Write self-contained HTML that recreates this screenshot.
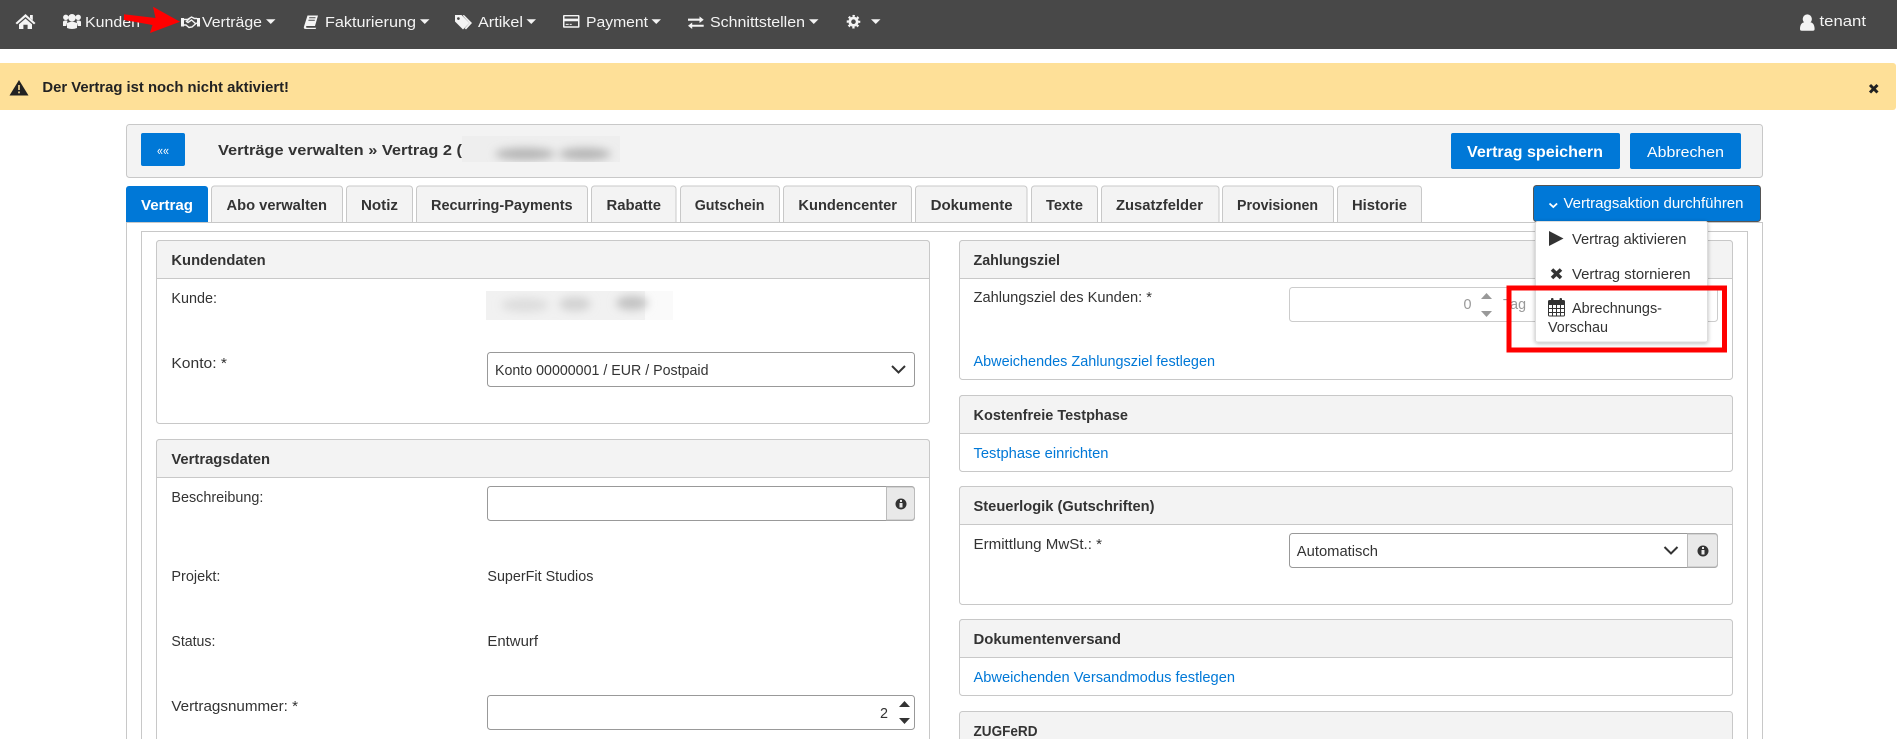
<!DOCTYPE html>
<html lang="de">
<head>
<meta charset="utf-8">
<title>Vertrag</title>
<style>
html,body{margin:0;padding:0;background:#fff;width:1897px;height:739px;overflow:hidden}
svg{display:block}
text{font-family:"Liberation Sans",Arial,sans-serif;font-size:15px;fill:#333}
.b{font-weight:700}
.w{fill:#fff}
.n{fill:#f4f4f4}
.l{fill:#0078d7}
.g{fill:#999}
.box{fill:#fff;stroke:#c8c8c8;stroke-width:1}
.hd{fill:#f3f3f3;stroke:#c8c8c8;stroke-width:1}
.inp{fill:#fff;stroke:#999;stroke-width:1}
.tab{fill:#f3f3f3;stroke:#c8c8c8;stroke-width:1}
</style>
</head>
<body>
<svg xmlns="http://www.w3.org/2000/svg" width="1897" height="739" viewBox="0 0 1897 739">
<defs>
<filter id="bl" x="-30%" y="-80%" width="160%" height="260%"><feGaussianBlur stdDeviation="4.500"/></filter>
<filter id="sh" x="-20%" y="-20%" width="140%" height="140%"><feDropShadow dx="0" dy="1" stdDeviation="2" flood-color="#000" flood-opacity=".28"/></filter>
<clipPath id="c1"><rect x="462" y="136" width="158" height="26"/></clipPath>
<clipPath id="c2"><rect x="486" y="291" width="187" height="29"/></clipPath>
</defs>

<!-- Navbar -->
<rect width="1897" height="49" fill="#484848"/>
<g fill="#f4f4f4">
<path d="M25.500 14 35.500 23 34 24.400 25.500 17 17 24.400 15.500 23Z"/>
<path d="M30 15h2.800v5.200L30 18Z"/>
<path d="M19 24.300 25.500 18.600 32 24.300V29H27.600V24.800H23.400V29H19Z"/>
<circle cx="72" cy="17.800" r="3.800"/>
<circle cx="65.800" cy="17.300" r="2.700"/>
<circle cx="78.200" cy="17.300" r="2.700"/>
<path d="M67 23q5-2.500 10 0v5q-5 2-10 0Z"/>
<path d="M63 21.500q2-1.800 4.500-.8l-1.200 5.300H63Z"/>
<path d="M81 21.500q-2-1.800-4.500-.8l1.200 5.300H81Z"/>
<path d="M304 26.500 307.500 15.500H318L315 26H306.500Q305.300 27.300 307 27.800H316.200L315.600 29H306Q303 29 304 26.500ZM309 18.200h6.500v-1H309.300Zm-.7 2.500h6.500v-1H308.600Z" fill-rule="evenodd"/>
<path d="M455 15h6.500l8 8-6.500 6.500-8-8Zm3.400 2.200a1.400 1.400 0 1 0 .01 0Z" fill-rule="evenodd"/>
<path d="M464 15l8 8-6 6.500-1.300-1.200 4.800-5.300-6.900-7.500Z"/>
<path d="M564 15h14.500a1 1 0 0 1 1 1v10.700a1 1 0 0 1-1 1H564a1 1 0 0 1-1-1V16a1 1 0 0 1 1-1Zm.5 1.400v2.200h13.500v-2.200Zm0 4.800v5h13.500v-5Zm1.200 2.700h3v1h-3Zm4 0h2v1h-2Z" fill-rule="evenodd"/>
<path d="M688 18.600h11.500v-2.200l4.200 3.300-4.200 3.300v-2.200H688Z"/>
<path d="M703.700 24.700H692.200v-2.200L688 25.700l4.200 3.300v-2.200h11.500Z"/>
<circle cx="1807.300" cy="19" r="4.600"/>
<path d="M1800 29c0-5 2.500-6.500 4.500-6.700q2.800 1.700 5.600 0c2 .2 4.500 1.700 4.500 6.700q0 1.800-1.800 1.800h-11q-1.800 0-1.800-1.800Z"/>
</g>
<circle cx="853.500" cy="21.700" r="3.700" fill="none" stroke="#f4f4f4" stroke-width="2.800"/>
<circle cx="853.500" cy="21.700" r="5.800" fill="none" stroke="#f4f4f4" stroke-width="2" stroke-dasharray="2.300 2.256" stroke-dashoffset="1.150"/>
<g fill="#f4f4f4"><rect x="181" y="18" width="3" height="8.500"/><rect x="197" y="18" width="3" height="8.500"/></g>
<path d="M184 19.500h3.500l4-2.500 3 1.500h2.500M184 25h2l3 2.500 3-.5 4-3.500 1-.5M196 24l-4.500-4-3.500 2.500-1.500-1 4-4" fill="none" stroke="#f4f4f4" stroke-width="1.400"/>
<text class="n" x="85" y="27" textLength="55" lengthAdjust="spacingAndGlyphs">Kunden</text>
<text class="n" x="202" y="27" textLength="60" lengthAdjust="spacingAndGlyphs">Verträge</text>
<text class="n" x="325" y="27" textLength="91" lengthAdjust="spacingAndGlyphs">Fakturierung</text>
<text class="n" x="478" y="27" textLength="45" lengthAdjust="spacingAndGlyphs">Artikel</text>
<text class="n" x="586" y="27" textLength="62" lengthAdjust="spacingAndGlyphs">Payment</text>
<text class="n" x="710" y="27" textLength="95" lengthAdjust="spacingAndGlyphs">Schnittstellen</text>
<text class="n" x="1819.500" y="26" textLength="46.500" lengthAdjust="spacingAndGlyphs">tenant</text>
<g fill="#f4f4f4">
<path d="M143 19.300h9l-4.500 4.700Z"/>
<path d="M266 19.300h9.500l-4.750 4.700Z"/>
<path d="M420 19.300h9.500l-4.750 4.700Z"/>
<path d="M526.500 19.300h9.500l-4.750 4.700Z"/>
<path d="M651.500 19.300h9.500l-4.750 4.700Z"/>
<path d="M809 19.300h9.500l-4.750 4.700Z"/>
<path d="M871 19.300h9.500l-4.750 4.700Z"/>
</g>
<path d="M124 14.300 155.500 18 153 6.700 180 21.700 150 33 152.500 25 124 20Z" fill="#f00"/>

<!-- Alert -->
<path d="M0 63H1893a3 3 0 0 1 3 3V107a3 3 0 0 1-3 3H0Z" fill="#fee098"/>
<path d="M19 80 28.500 95.500H9.500Z" fill="#222"/>
<rect x="18.200" y="85" width="1.600" height="5" fill="#fee098"/><rect x="18.200" y="91.500" width="1.600" height="1.800" fill="#fee098"/>
<text class="b" x="42.400" y="92" textLength="246.600" lengthAdjust="spacingAndGlyphs" style="fill:#222">Der Vertrag ist noch nicht aktiviert!</text>
<path d="M1870 85 1877.500 92.500M1877.500 85 1870 92.500" stroke="#222" stroke-width="3"/>

<!-- Header box -->
<rect class="hd" x="126.500" y="124.500" width="1636" height="53" rx="3"/>
<rect x="141" y="133" width="44" height="33" rx="2" fill="#0078d7"/>
<text class="w" x="157" y="155" style="font-size:13px" textLength="12" lengthAdjust="spacingAndGlyphs">««</text>
<text class="b" x="218" y="155" textLength="244" lengthAdjust="spacingAndGlyphs">Verträge verwalten » Vertrag 2 (</text>
<g clip-path="url(#c1)">
<rect x="462" y="136" width="158" height="26" fill="#eeeeee"/>
<g filter="url(#bl)"><ellipse cx="525" cy="154" rx="30" ry="6" fill="#b4b4b4"/><ellipse cx="585" cy="154" rx="26" ry="6" fill="#b4b4b4"/></g>
</g>
<rect x="1451" y="133" width="169" height="36" rx="2" fill="#0078d7"/>
<text class="b w" x="1467" y="157" textLength="136" lengthAdjust="spacingAndGlyphs" style="font-size:16px">Vertrag speichern</text>
<rect x="1630" y="133" width="111" height="36" rx="2" fill="#0078d7"/>
<text class="w" x="1647" y="157" textLength="77" lengthAdjust="spacingAndGlyphs">Abbrechen</text>

<!-- Tabs / frames -->
<path d="M126.500 739V222.500H1762.500V739" fill="#fff" stroke="#c8c8c8"/>
<path d="M141.500 739V231.500H1747.500V739" fill="#fff" stroke="#c8c8c8"/>
<path d="M126 222V189a3 3 0 0 1 3-3H205a3 3 0 0 1 3 3V222Z" fill="#0078d7"/>
<path class="tab" d="M211.500 222V189a3 3 0 0 1 3-3H339.500a3 3 0 0 1 3 3V222"/>
<path class="tab" d="M346.500 222V189a3 3 0 0 1 3-3H409.500a3 3 0 0 1 3 3V222"/>
<path class="tab" d="M416.500 222V189a3 3 0 0 1 3-3H584.500a3 3 0 0 1 3 3V222"/>
<path class="tab" d="M591.500 222V189a3 3 0 0 1 3-3H673a3 3 0 0 1 3 3V222"/>
<path class="tab" d="M680.500 222V189a3 3 0 0 1 3-3H776.500a3 3 0 0 1 3 3V222"/>
<path class="tab" d="M783.500 222V189a3 3 0 0 1 3-3H908.500a3 3 0 0 1 3 3V222"/>
<path class="tab" d="M915.500 222V189a3 3 0 0 1 3-3H1024a3 3 0 0 1 3 3V222"/>
<path class="tab" d="M1031.500 222V189a3 3 0 0 1 3-3H1094.500a3 3 0 0 1 3 3V222"/>
<path class="tab" d="M1101.500 222V189a3 3 0 0 1 3-3H1216a3 3 0 0 1 3 3V222"/>
<path class="tab" d="M1222.500 222V189a3 3 0 0 1 3-3H1330.500a3 3 0 0 1 3 3V222"/>
<path class="tab" d="M1337.500 222V189a3 3 0 0 1 3-3H1418.500a3 3 0 0 1 3 3V222"/>
<text class="b w" x="141" y="210" textLength="52" lengthAdjust="spacingAndGlyphs">Vertrag</text>
<text class="b" x="226.500" y="210" textLength="100.500" lengthAdjust="spacingAndGlyphs">Abo verwalten</text>
<text class="b" x="361" y="210" textLength="37" lengthAdjust="spacingAndGlyphs">Notiz</text>
<text class="b" x="431" y="210" textLength="141.600" lengthAdjust="spacingAndGlyphs">Recurring-Payments</text>
<text class="b" x="606.500" y="210" textLength="54.500" lengthAdjust="spacingAndGlyphs">Rabatte</text>
<text class="b" x="694.700" y="210" textLength="69.800" lengthAdjust="spacingAndGlyphs">Gutschein</text>
<text class="b" x="798.400" y="210" textLength="98.600" lengthAdjust="spacingAndGlyphs">Kundencenter</text>
<text class="b" x="930.600" y="210" textLength="82" lengthAdjust="spacingAndGlyphs">Dokumente</text>
<text class="b" x="1046" y="210" textLength="37" lengthAdjust="spacingAndGlyphs">Texte</text>
<text class="b" x="1116" y="210" textLength="87" lengthAdjust="spacingAndGlyphs">Zusatzfelder</text>
<text class="b" x="1237" y="210" textLength="81" lengthAdjust="spacingAndGlyphs">Provisionen</text>
<text class="b" x="1352" y="210" textLength="55" lengthAdjust="spacingAndGlyphs">Historie</text>

<!-- Left: Kundendaten -->
<rect class="box" x="156.500" y="240.500" width="773" height="183" rx="3"/>
<path class="hd" d="M156.500 278.500V243.500a3 3 0 0 1 3-3H926.500a3 3 0 0 1 3 3V278.500Z"/>
<text class="b" x="171.400" y="265" textLength="94.300" lengthAdjust="spacingAndGlyphs">Kundendaten</text>
<text x="171.400" y="303" textLength="45.600" lengthAdjust="spacingAndGlyphs">Kunde:</text>
<g clip-path="url(#c2)">
<rect x="486" y="291" width="187" height="29" fill="#f1f1f1"/>
<rect x="645" y="291" width="28" height="29" fill="#fafafa"/>
<g filter="url(#bl)"><ellipse cx="525" cy="305" rx="24" ry="7" fill="#dddddd"/><ellipse cx="575" cy="304" rx="16" ry="7" fill="#d2d2d2"/><ellipse cx="632" cy="303" rx="16" ry="7" fill="#c2c2c2"/></g>
</g>
<text x="171.400" y="368" textLength="55.600" lengthAdjust="spacingAndGlyphs">Konto: *</text>
<rect class="inp" x="487.500" y="352.500" width="427" height="34" rx="3"/>
<text x="495" y="375" textLength="213.500" lengthAdjust="spacingAndGlyphs">Konto 00000001 / EUR / Postpaid</text>
<path d="M892 366 898.500 372.500 905 366" fill="none" stroke="#333" stroke-width="2"/>

<!-- Left: Vertragsdaten -->
<path class="box" d="M156.500 739V442.500a3 3 0 0 1 3-3H926.500a3 3 0 0 1 3 3V739"/>
<path class="hd" d="M156.500 477.500V442.500a3 3 0 0 1 3-3H926.500a3 3 0 0 1 3 3V477.500Z"/>
<text class="b" x="171.400" y="464" textLength="98.600" lengthAdjust="spacingAndGlyphs">Vertragsdaten</text>
<text x="171.400" y="502" textLength="92" lengthAdjust="spacingAndGlyphs">Beschreibung:</text>
<rect class="inp" x="487.500" y="486.500" width="427" height="34" rx="3"/>
<path d="M886.500 487H911.500a3 3 0 0 1 3 3V517a3 3 0 0 1-3 3H886.500Z" fill="#e9e9e9" stroke="#bbb"/>
<circle cx="901" cy="504" r="5.500" fill="#333"/><rect x="900" y="500" width="2" height="2" fill="#e9e9e9"/><rect x="899.500" y="503" width="3" height="4.500" fill="#e9e9e9"/>
<text x="171.400" y="581" textLength="49" lengthAdjust="spacingAndGlyphs">Projekt:</text>
<text x="487.400" y="581" textLength="106" lengthAdjust="spacingAndGlyphs">SuperFit Studios</text>
<text x="171.400" y="646" textLength="44" lengthAdjust="spacingAndGlyphs">Status:</text>
<text x="487.400" y="646" textLength="50.600" lengthAdjust="spacingAndGlyphs">Entwurf</text>
<text x="171.400" y="711" textLength="126.600" lengthAdjust="spacingAndGlyphs">Vertragsnummer: *</text>
<rect class="inp" x="487.500" y="695.500" width="427" height="34" rx="3"/>
<text x="880" y="718" textLength="8" lengthAdjust="spacingAndGlyphs">2</text>
<path d="M899 707h11l-5.500-6Z" fill="#333"/><path d="M899 718h11l-5.500 6Z" fill="#333"/>

<!-- Right: Zahlungsziel -->
<rect class="box" x="959.500" y="240.500" width="773" height="139" rx="3"/>
<path class="hd" d="M959.500 278.500V243.500a3 3 0 0 1 3-3H1729.500a3 3 0 0 1 3 3V278.500Z"/>
<text class="b" x="973.500" y="265" textLength="86.500" lengthAdjust="spacingAndGlyphs">Zahlungsziel</text>
<text x="973.500" y="302" textLength="178.500" lengthAdjust="spacingAndGlyphs">Zahlungsziel des Kunden: *</text>
<rect x="1289.500" y="287.500" width="428" height="34" rx="3" fill="#fff" stroke="#ccc"/>
<text class="g" x="1463.500" y="309" textLength="8" lengthAdjust="spacingAndGlyphs">0</text>
<path d="M1481 299h11l-5.500-6Z" fill="#999"/><path d="M1481 311h11l-5.500 6Z" fill="#999"/>
<text class="g" x="1503" y="309" textLength="23" lengthAdjust="spacingAndGlyphs">Tag</text>
<text class="l" x="973.500" y="366" textLength="241.500" lengthAdjust="spacingAndGlyphs">Abweichendes Zahlungsziel festlegen</text>

<!-- Right: Kostenfreie Testphase -->
<rect class="box" x="959.500" y="395.500" width="773" height="76" rx="3"/>
<path class="hd" d="M959.500 433.500V398.500a3 3 0 0 1 3-3H1729.500a3 3 0 0 1 3 3V433.500Z"/>
<text class="b" x="973.500" y="420" textLength="154.500" lengthAdjust="spacingAndGlyphs">Kostenfreie Testphase</text>
<text class="l" x="973.500" y="458" textLength="135" lengthAdjust="spacingAndGlyphs">Testphase einrichten</text>

<!-- Right: Steuerlogik -->
<rect class="box" x="959.500" y="486.500" width="773" height="118" rx="3"/>
<path class="hd" d="M959.500 524.500V489.500a3 3 0 0 1 3-3H1729.500a3 3 0 0 1 3 3V524.500Z"/>
<text class="b" x="973.500" y="511" textLength="181" lengthAdjust="spacingAndGlyphs">Steuerlogik (Gutschriften)</text>
<text x="973.500" y="549" textLength="128.500" lengthAdjust="spacingAndGlyphs">Ermittlung MwSt.: *</text>
<rect class="inp" x="1289.500" y="533.500" width="428" height="34" rx="3"/>
<path d="M1687.500 534H1714.500a3 3 0 0 1 3 3V564a3 3 0 0 1-3 3H1687.500Z" fill="#e9e9e9" stroke="#bbb"/>
<text x="1296.800" y="556" textLength="81.200" lengthAdjust="spacingAndGlyphs">Automatisch</text>
<path d="M1664.500 547 1671 553.500 1677.500 547" fill="none" stroke="#333" stroke-width="2"/>
<circle cx="1703" cy="551" r="5.500" fill="#333"/><rect x="1702" y="547" width="2" height="2" fill="#e9e9e9"/><rect x="1701.500" y="550" width="3" height="4.500" fill="#e9e9e9"/>

<!-- Right: Dokumentenversand -->
<rect class="box" x="959.500" y="619.500" width="773" height="76" rx="3"/>
<path class="hd" d="M959.500 657.500V622.500a3 3 0 0 1 3-3H1729.500a3 3 0 0 1 3 3V657.500Z"/>
<text class="b" x="973.500" y="644" textLength="147.500" lengthAdjust="spacingAndGlyphs">Dokumentenversand</text>
<text class="l" x="973.500" y="682" textLength="261.500" lengthAdjust="spacingAndGlyphs">Abweichenden Versandmodus festlegen</text>

<!-- Right: ZUGFeRD -->
<path class="hd" d="M959.500 739V714.500a3 3 0 0 1 3-3H1729.500a3 3 0 0 1 3 3V739"/>
<text class="b" x="973.500" y="736" textLength="64" lengthAdjust="spacingAndGlyphs">ZUGFeRD</text>

<!-- Dropdown -->
<rect x="1533.500" y="185.500" width="227" height="36" rx="3" fill="#0078d7" stroke="#555"/>
<path d="M1549.500 203.500 1553.300 207 1557.100 203.500" fill="none" stroke="#fff" stroke-width="1.800"/>
<text class="w" x="1563.500" y="208" textLength="180" lengthAdjust="spacingAndGlyphs">Vertragsaktion durchführen</text>
<rect x="1535.500" y="221.500" width="172" height="120.500" rx="2" fill="#fff" stroke="#ddd" filter="url(#sh)"/>
<path d="M1549 231 1563.500 238.500 1549 246Z" fill="#333"/>
<text x="1572" y="244" textLength="114.400" lengthAdjust="spacingAndGlyphs">Vertrag aktivieren</text>
<path d="M1552 269.500 1561 278M1561 269.500 1552 278" stroke="#333" stroke-width="3.600"/>
<text x="1572" y="279" textLength="118.600" lengthAdjust="spacingAndGlyphs">Vertrag stornieren</text>
<g fill="none" stroke="#333">
<rect x="1548.500" y="300.500" width="16" height="15.500" rx="1"/>
<path d="M1548.500 304.500h16M1548.500 308.500h16M1548.500 312.500h16M1552.500 304.500v11.500M1556.500 304.500v11.500M1560.500 304.500v11.500"/>
</g>
<rect x="1551" y="298" width="2.500" height="5" rx="1" fill="#333"/><rect x="1559.500" y="298" width="2.500" height="5" rx="1" fill="#333"/>
<rect x="1548.500" y="300.500" width="16" height="3.500" fill="#333"/>
<text x="1572" y="313" textLength="90" lengthAdjust="spacingAndGlyphs">Abrechnungs-</text>
<text x="1548" y="332" textLength="60" lengthAdjust="spacingAndGlyphs">Vorschau</text>

<!-- Red highlight -->
<rect x="1509" y="288" width="215.500" height="62" fill="none" stroke="#f00" stroke-width="5"/>
</svg>
</body>
</html>
